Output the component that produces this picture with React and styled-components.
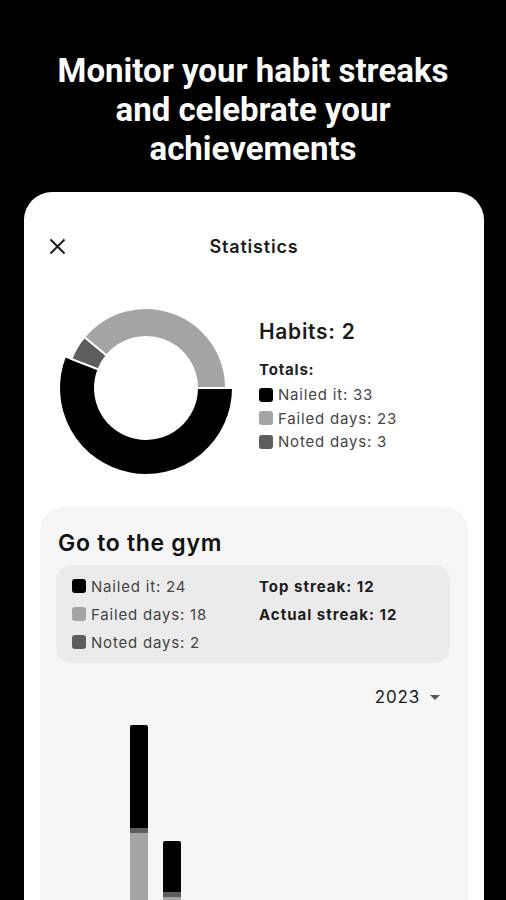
import React from 'react';
import styled, { createGlobalStyle } from 'styled-components';

const GlobalStyle = createGlobalStyle`
    html, body {
        margin: 0;
        padding: 0;
        background: #000;
        overflow: hidden;
    }
`;

const COLORS = {
    nailed: '#000000',
    failed: '#a4a4a4',
    noted: '#5d5d5d',
};

const Page = styled.div`
    box-sizing: border-box;
    min-height: 100vh;
    background: #000;
    padding-top: 51px;
    font-family: 'Inter', 'Roboto', sans-serif;
`;

const Headline = styled.h1`
    margin: 0 0 24px;
    color: #fff;
    font-family: 'Roboto', 'Liberation Sans', sans-serif;
    font-weight: 700;
    font-size: 33px;
    line-height: 39px;
    text-align: center;
`;

const Sheet = styled.div`
    background: #fff;
    margin: 0 22px 0 24px;
    border-radius: 28px 28px 0 0;
    min-height: 760px;
`;

const Header = styled.div`
    display: grid;
    grid-template-columns: 60px 1fr 60px;
    align-items: center;
    padding-top: 30px;
    height: 48px;
`;

const CloseButton = styled.button`
    border: none;
    background: none;
    padding: 0;
    margin-left: 25px;
    width: 17px;
    height: 17px;
    display: flex;
`;

const Title = styled.div`
    text-align: center;
    font-size: 18px;
    font-weight: 600;
    color: #1c1c1c;
    letter-spacing: 0.8px;
`;

const Summary = styled.div`
    display: flex;
    gap: 23px;
    margin-top: 28px;
    padding-left: 32px;
`;

const Legend = styled.div`
    padding-top: 20px;
`;

const HabitsCount = styled.div`
    font-size: 21px;
    font-weight: 600;
    line-height: 28px;
    color: #1c1c1c;
    letter-spacing: 0.7px;
`;

const TotalsLabel = styled.div`
    margin-top: 14px;
    margin-bottom: 3px;
    font-size: 15px;
    font-weight: 700;
    line-height: 20px;
    color: #222;
    letter-spacing: 0.8px;
`;

const LegendItem = styled.div`
    display: flex;
    align-items: center;
    gap: 5px;
    height: ${p => p.$height || 23.5}px;
    font-size: 15px;
    color: #444;
    letter-spacing: 0.8px;
`;

const Swatch = styled.span`
    width: 14px;
    height: 14px;
    border-radius: 3px;
    background: ${p => p.$color};
    flex-shrink: 0;
`;

const HabitCard = styled.div`
    margin: 29px 16px 0 16px;
    background: #f5f5f5;
    border-radius: 24px 24px 0 0;
    padding: 21px 18px 0 16px;
    min-height: 500px;
`;

const HabitName = styled.div`
    margin-left: 2px;
    font-size: 23px;
    font-weight: 600;
    line-height: 30px;
    color: #111;
    letter-spacing: 0.7px;
`;

const StatsBox = styled.div`
    margin-top: 7px;
    background: #ebebeb;
    border-radius: 16px;
    padding: 7px 16px;
    display: grid;
    grid-template-columns: 187px 1fr;
`;

const Streak = styled.div`
    height: 28px;
    display: flex;
    align-items: center;
    font-size: 15px;
    font-weight: 700;
    color: #1c1c1c;
    letter-spacing: 1px;
`;

const YearRow = styled.div`
    margin-top: 22px;
    display: flex;
    justify-content: flex-end;
    align-items: center;
    gap: 10px;
    padding-right: 10px;
    height: 24px;
    font-size: 17px;
    color: #1c1c1c;
    letter-spacing: 0.8px;
`;

const Caret = styled.span`
    width: 0;
    height: 0;
    border-left: 5px solid transparent;
    border-right: 5px solid transparent;
    border-top: 5px solid #555;
`;

const ChartWrap = styled.div`
    display: block;
    height: 260px;
`;

function point(cx, cy, r, a) {
    const rad = (a * Math.PI) / 180;
    return [cx + r * Math.cos(rad), cy + r * Math.sin(rad)];
}

function arcPath(cx, cy, r0, r1, a0, a1) {
    const large = a1 - a0 > 180 ? 1 : 0;
    const [x1, y1] = point(cx, cy, r1, a0);
    const [x2, y2] = point(cx, cy, r1, a1);
    const [x3, y3] = point(cx, cy, r0, a1);
    const [x4, y4] = point(cx, cy, r0, a0);
    return `M${x1} ${y1} A${r1} ${r1} 0 ${large} 1 ${x2} ${y2} L${x3} ${y3} A${r0} ${r0} 0 ${large} 0 ${x4} ${y4} Z`;
}

const Donut = ({ sections }) => {
    const total = sections.reduce((s, x) => s + x.value, 0);
    let start = 0;
    return (
        <svg width="180" height="180" viewBox="0 0 180 180">
            {sections.map(s => {
                const sweep = (s.value / total) * 360;
                const d = arcPath(90, 90, 51, s.radius, start, start + sweep);
                start += sweep;
                return <path key={s.key} d={d} fill={s.color} stroke="#fff" strokeWidth="2" strokeLinejoin="miter" />;
            })}
        </svg>
    );
};

const Bar = ({ x, top, black, noted, bottom }) => (
    <g>
        <path d={`M${x} ${top + 2} Q${x} ${top} ${x + 2} ${top} L${x + 16} ${top} Q${x + 18} ${top} ${x + 18} ${top + 2} L${x + 18} ${black} L${x} ${black} Z`} fill={COLORS.nailed} />
        <rect x={x} y={black} width="18" height={noted - black} fill={COLORS.noted} />
        <rect x={x} y={noted} width="18" height={bottom - noted} fill={COLORS.failed} />
    </g>
);

const App = () => {
    const totals = [
        { key: 'nailed', label: 'Nailed it', value: 33, color: COLORS.nailed, radius: 87 },
        { key: 'noted', label: 'Noted days', value: 3, color: COLORS.noted, radius: 80 },
        { key: 'failed', label: 'Failed days', value: 23, color: COLORS.failed, radius: 80 },
    ];
    const legendOrder = [totals[0], totals[2], totals[1]];
    const gym = [
        { label: 'Nailed it', value: 24, color: COLORS.nailed },
        { label: 'Failed days', value: 18, color: COLORS.failed },
        { label: 'Noted days', value: 2, color: COLORS.noted },
    ];
    const streaks = ['Top streak: 12', 'Actual streak: 12'];

    return (
        <Page>
            <GlobalStyle />
            <Headline>
                Monitor your habit streaks<br />
                and celebrate your<br />
                achievements
            </Headline>
            <Sheet>
                <Header>
                    <CloseButton aria-label="Close">
                        <svg width="17" height="17" viewBox="0 0 17 17">
                            <path d="M1.5 1.5 L15.5 15.5 M15.5 1.5 L1.5 15.5" stroke="#1c1c1c" strokeWidth="2" />
                        </svg>
                    </CloseButton>
                    <Title>Statistics</Title>
                    <span />
                </Header>

                <Summary>
                    <Donut sections={totals} />
                    <Legend>
                        <HabitsCount>Habits: 2</HabitsCount>
                        <TotalsLabel>Totals:</TotalsLabel>
                        {legendOrder.map(t => (
                            <LegendItem key={t.key}>
                                <Swatch $color={t.color} />
                                {t.label}: {t.value}
                            </LegendItem>
                        ))}
                    </Legend>
                </Summary>

                <HabitCard>
                    <HabitName>Go to the gym</HabitName>
                    <StatsBox>
                        {gym.map((g, i) => (
                            <React.Fragment key={g.label}>
                                <LegendItem $height={28}>
                                    <Swatch $color={g.color} />
                                    {g.label}: {g.value}
                                </LegendItem>
                                {i < 2 ? <Streak>{streaks[i]}</Streak> : <span />}
                            </React.Fragment>
                        ))}
                    </StatsBox>
                    <YearRow>
                        2023
                        <Caret />
                    </YearRow>
                    <ChartWrap>
                        <svg width="394" height="260" viewBox="0 0 394 260">
                            <Bar x={74} top={16} black={119} noted={124} bottom={260} />
                            <Bar x={107} top={132} black={183} noted={188} bottom={260} />
                        </svg>
                    </ChartWrap>
                </HabitCard>
            </Sheet>
        </Page>
    );
};

export default App;
